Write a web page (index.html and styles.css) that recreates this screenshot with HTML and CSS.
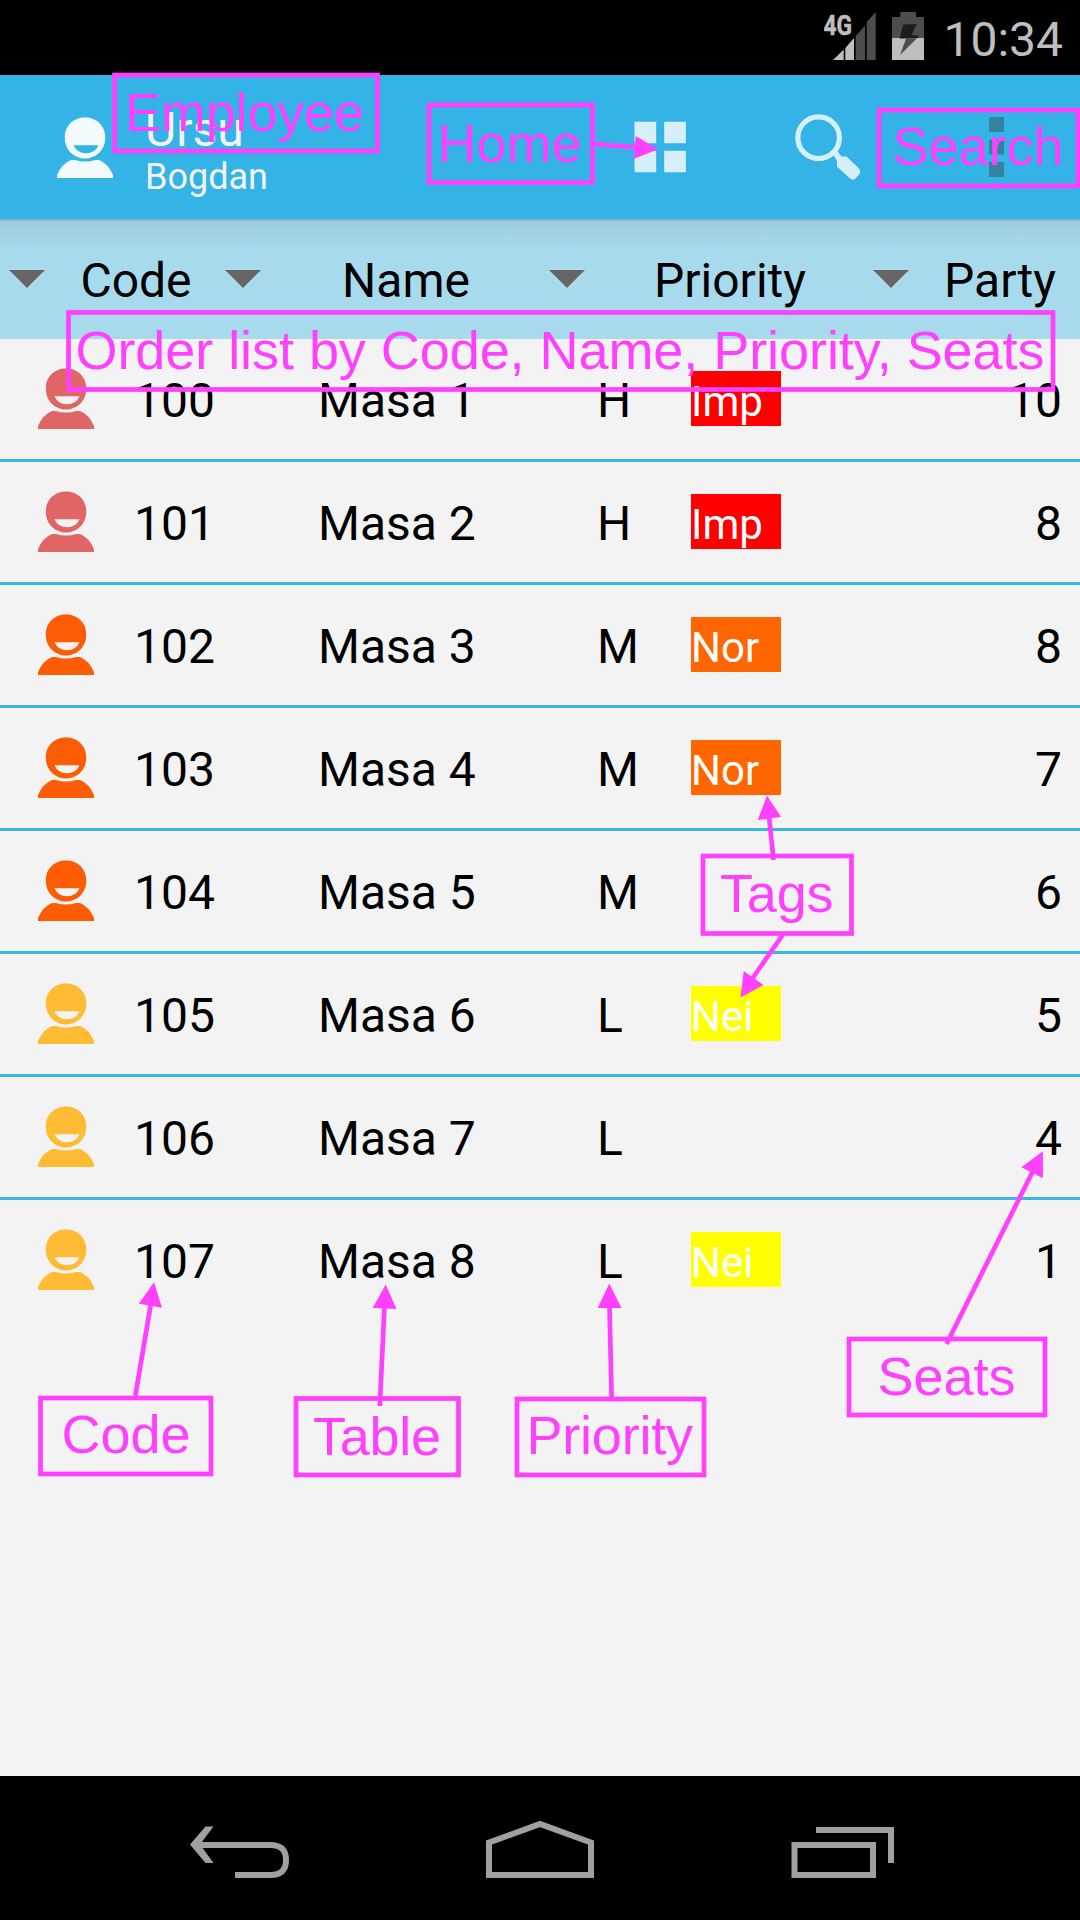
FILE: index.html
```html
<!DOCTYPE html>
<html lang="en">
<head>
<meta charset="utf-8">
<title>Tables</title>
<link rel="stylesheet" href="styles.css">
</head>
<body>
<svg class="defs" aria-hidden="true">
  <symbol id="person" viewBox="0 0 56 61">
    <path fill-rule="evenodd" d="M28 0.5C39.500 0.500 48.300 8.500 48.300 20.500C48.300 34 38 41.500 28 41.500S7.800 34 7.800 20.500C7.800 8.500 16.500 0.500 28 0.500ZM16.500 28.200H41.500Q38 36.200 29 36.200T16.500 28.200Z"/>
    <path d="M0 61V58Q5 46.500 14 43H18Q28 46 38 43H42Q51 46.500 56 58V61Z"/>
  </symbol>
</svg>
<div class="screen">
  <header class="status-bar">
    <svg class="status-icons" width="104" height="75" viewBox="824 0 104 75">
      <text class="network" x="823.500" y="34.700" textLength="28.500" lengthAdjust="spacingAndGlyphs">4G</text>
      <path class="lit" d="M833 60L843.700 49.500V60ZM845.300 60V48L854 38V60Z"/>
      <path class="dim" d="M855.700 60V36L865 25.500V60ZM866.700 60V22L875.700 12V60Z"/>
      <path class="dim" d="M892 38V17H900.300V12H916V17H924V38Z"/>
      <path class="lit" d="M892 38H924V60H892Z"/>
      <path class="bolt-dark" d="M903.300 24.500L916.700 24L911.700 35L919 35.700L916.700 38.500H899.500Z"/>
      <path class="dim" d="M899.300 38.500H916.700L900 55L906 38.700Z"/>
    </svg>
    <time class="clock">10:34</time>
  </header>

  <div class="action-bar">
    <svg class="avatar" width="56" height="61"><use href="#person"/></svg>
    <div class="user">
      <div class="user-title">Ursu</div>
      <div class="user-sub">Bogdan</div>
    </div>
    <svg class="action home" width="52" height="52" viewBox="634 121 52 52">
      <path d="M634.500 121.800h21.700v21.400h-21.700zM664.200 121.800h21.700v21.400h-21.700zM634.500 150.800h21.700v21.400h-21.700zM664.200 150.800h21.700v21.400h-21.700z"/>
    </svg>
    <svg class="action search" width="68" height="68" viewBox="794 113 68 68">
      <circle cx="818.600" cy="137.700" r="20.800"/>
      <path d="M833 154L837 150.500L841.500 156.500H846.500L859 168.500Q861 171 860 173.500L855 179Q852.500 180.500 850 178.500L837 166.500V161Z"/>
    </svg>
    <svg class="overflow" width="15" height="60" viewBox="0 0 15 60">
      <path d="M0 0h15v15H0zM0 22.500h15v15H0zM0 45h15v15H0z"/>
    </svg>
  </div>

  <div class="sort-bar">
    <div class="sort"><i class="caret"></i><span>Code</span></div>
    <div class="sort"><i class="caret"></i><span>Name</span></div>
    <div class="sort"><i class="caret"></i><span>Priority</span></div>
    <div class="sort"><i class="caret"></i><span>Party</span></div>
  </div>

  <main class="list">
    <div class="row high"><svg class="person"><use href="#person"/></svg><span>100</span><span>Masa 1</span><span>H</span><span class="tag important">Imp</span><span class="seats">10</span></div>
    <div class="row high"><svg class="person"><use href="#person"/></svg><span>101</span><span>Masa 2</span><span>H</span><span class="tag important">Imp</span><span class="seats">8</span></div>
    <div class="row medium"><svg class="person"><use href="#person"/></svg><span>102</span><span>Masa 3</span><span>M</span><span class="tag normal">Nor</span><span class="seats">8</span></div>
    <div class="row medium"><svg class="person"><use href="#person"/></svg><span>103</span><span>Masa 4</span><span>M</span><span class="tag normal">Nor</span><span class="seats">7</span></div>
    <div class="row medium"><svg class="person"><use href="#person"/></svg><span>104</span><span>Masa 5</span><span>M</span><span class="seats">6</span></div>
    <div class="row low"><svg class="person"><use href="#person"/></svg><span>105</span><span>Masa 6</span><span>L</span><span class="tag neighbour">Nei</span><span class="seats">5</span></div>
    <div class="row low"><svg class="person"><use href="#person"/></svg><span>106</span><span>Masa 7</span><span>L</span><span class="seats">4</span></div>
    <div class="row low"><svg class="person"><use href="#person"/></svg><span>107</span><span>Masa 8</span><span>L</span><span class="tag neighbour">Nei</span><span class="seats">1</span></div>
  </main>

  <nav class="nav-bar">
    <svg width="108" height="144" viewBox="184 1776 108 144">
      <path class="solid" d="M190 1844.500L205.500 1826.500H213.500L200 1844.500L213.500 1863H205.500Z"/>
      <path d="M197 1845H270C282 1845 286 1851 286 1860S282 1875 270 1875H235"/>
    </svg>
    <svg width="108" height="144" viewBox="486 1776 108 144">
      <path d="M489 1842.500L540 1824L591 1842.500V1875H489Z"/>
    </svg>
    <svg width="108" height="144" viewBox="788 1776 108 144">
      <path d="M794.500 1845H873V1875H794.500ZM816 1830H891V1863"/>
    </svg>
  </nav>

  <svg class="notes" width="1080" height="1920" viewBox="0 0 1080 1920">
    <g class="frames">
      <rect x="114.500" y="75" width="263" height="76"/>
      <rect x="429" y="105" width="163.500" height="77.500"/>
      <rect x="879" y="110" width="199" height="76"/>
      <rect x="68.500" y="312.500" width="984.500" height="77"/>
      <rect x="703" y="856" width="148.500" height="77.500"/>
      <rect x="40.500" y="1398" width="170.500" height="76"/>
      <rect x="296" y="1398.500" width="162.500" height="76.500"/>
      <rect x="517" y="1399" width="187" height="76"/>
      <rect x="849" y="1339" width="196" height="76"/>
    </g>
    <g class="stems">
      <path d="M594 144L637 147.500M773.500 860L769 816M783.300 934L752 979M135.300 1396L151 1303M379.800 1406L384.500 1306M611.600 1397L609.500 1306M946.500 1344L1033 1171"/>
    </g>
    <path class="heads" d="M658 149.300L635.700 136L633.700 159ZM767 795.500L757.700 820L781 817ZM740.500 997.500L743.700 971L763.500 985ZM154 1282.300L138.800 1303.700L162 1307.700ZM385.700 1284.500L372.600 1308L396.500 1309ZM609.300 1283.500L597.700 1308H621.500ZM1042.900 1151.300L1021.300 1167.300L1042.900 1178.300Z"/>
    <g class="labels">
      <text x="125" y="130.700" textLength="239">Employee</text>
      <text x="437.500" y="161.700" textLength="144">Home</text>
      <text x="892.500" y="165.300" textLength="171">Search</text>
      <text x="75.500" y="369.300" textLength="969">Order list by Code, Name, Priority, Seats</text>
      <text x="720" y="912.300" textLength="113.500">Tags</text>
      <text x="61.500" y="1453.300" textLength="129">Code</text>
      <text x="313" y="1454.500" textLength="128">Table</text>
      <text x="526.500" y="1453.700" textLength="166.500">Priority</text>
      <text x="877.500" y="1394.700" textLength="138">Seats</text>
    </g>
  </svg>
</div>
</body>
</html>
```
FILE: styles.css
```css
body {
  margin: 0;
  background: #000;
  font-family: Roboto, sans-serif;
}

.defs {
  display: none;
}

.screen {
  position: relative;
  display: flex;
  flex-direction: column;
  width: 1080px;
  height: 1920px;
  overflow: hidden;
  background: #f3f3f3;
  color: #000;
  font-size: 48px;
  line-height: 56px;
}

/* status bar */
.status-bar {
  display: flex;
  justify-content: flex-end;
  align-items: center;
  flex: none;
  height: 75px;
  padding-right: 17px;
  background: #000;
}

.status-icons { margin-right: 15px; }
.lit { fill: #bebebe; }
.dim { fill: #4d4d4d; }
.bolt-dark { fill: #1c1c1c; }

.network {
  fill: #bebebe;
  stroke: #bebebe;
  stroke-width: 0.6;
  font-weight: 700;
  font-size: 27.500px;
}

.clock {
  padding-top: 5px;
  color: #bebebe;
}

/* action bar */
.action-bar {
  display: flex;
  align-items: center;
  flex: none;
  height: 144px;
  padding-left: 57px;
  background: #34b4e6;
}

.avatar { fill: #f2fafd; }

.user {
  width: 489px;
  margin-left: 32px;
  padding-top: 8px;
  color: #f3f3f3;
}

.user-title { line-height: 52px; }
.user-sub {
  font-size: 36px;
  line-height: 43px;
}

.action {
  flex: none;
  fill: #d6effa;
}

.search { margin-left: 108px; }
.search circle {
  fill: none;
  stroke: #d6effa;
  stroke-width: 5.200;
}

.overflow {
  margin-left: 127px;
  fill: #3583a0;
}

/* sort bar */
.sort-bar {
  display: grid;
  grid-template-columns: 216px 324px 324px 216px;
  flex: none;
  height: 120px;
  background: linear-gradient(#7fa9b8 0, #9dcfe1 3px, #a6daec 32px);
}

.sort {
  display: flex;
  align-items: center;
  filter: none;
}

.sort span {
  flex: 1;
  padding: 3px 0 0 2px;
  text-align: center;
}

.caret {
  width: 0;
  height: 0;
  margin: 0 9px;
  border: 18px solid transparent;
  border-top-color: #666;
  border-bottom-width: 0;
  filter: drop-shadow(0 0 2px rgba(255, 255, 255, 0.35));
}

/* table list */
.list { flex: 1; }

.row {
  display: grid;
  grid-template-columns: 96px 184px 279px 94px 90px 1fr;
  align-items: center;
  height: 120px;
  padding: 0 18px 0 38px;
  border-bottom: 3px solid #3bb5e4;
}

.row:last-child { border-bottom: 0; }
.row span { padding-top: 4px; }

.person {
  width: 56px;
  height: 61px;
  margin-bottom: 1px;
}

.high .person { fill: #e06666; }
.medium .person { fill: #fb5c04; }
.low .person { fill: #ffbb33; }

.row .tag {
  height: 55px;
  margin-bottom: 1px;
  padding: 0;
  color: #fff;
  font-size: 42px;
  line-height: 62px;
}

.important { background: #f00; }
.normal { background: #f60; }
.neighbour { background: #ff0; }

.seats {
  grid-column: 6;
  text-align: right;
}

/* navigation bar */
.nav-bar {
  display: grid;
  grid-template-columns: repeat(3, 302px);
  justify-content: center;
  justify-items: center;
  flex: none;
  height: 144px;
  background: #000;
}

.nav-bar path {
  fill: none;
  stroke: #a0a0a0;
  stroke-width: 6;
}

.nav-bar .solid {
  fill: #a0a0a0;
  stroke: none;
}

/* callouts drawn over the screen */
.notes {
  position: absolute;
  top: 0;
  left: 0;
}

.frames,
.stems {
  fill: none;
  stroke: #ff40ff;
  stroke-width: 4.700;
}

.heads { fill: #ff40ff; }

.labels {
  fill: #ff40ff;
  font-family: "Liberation Sans", Arial, sans-serif;
  font-size: 54px;
}
```
